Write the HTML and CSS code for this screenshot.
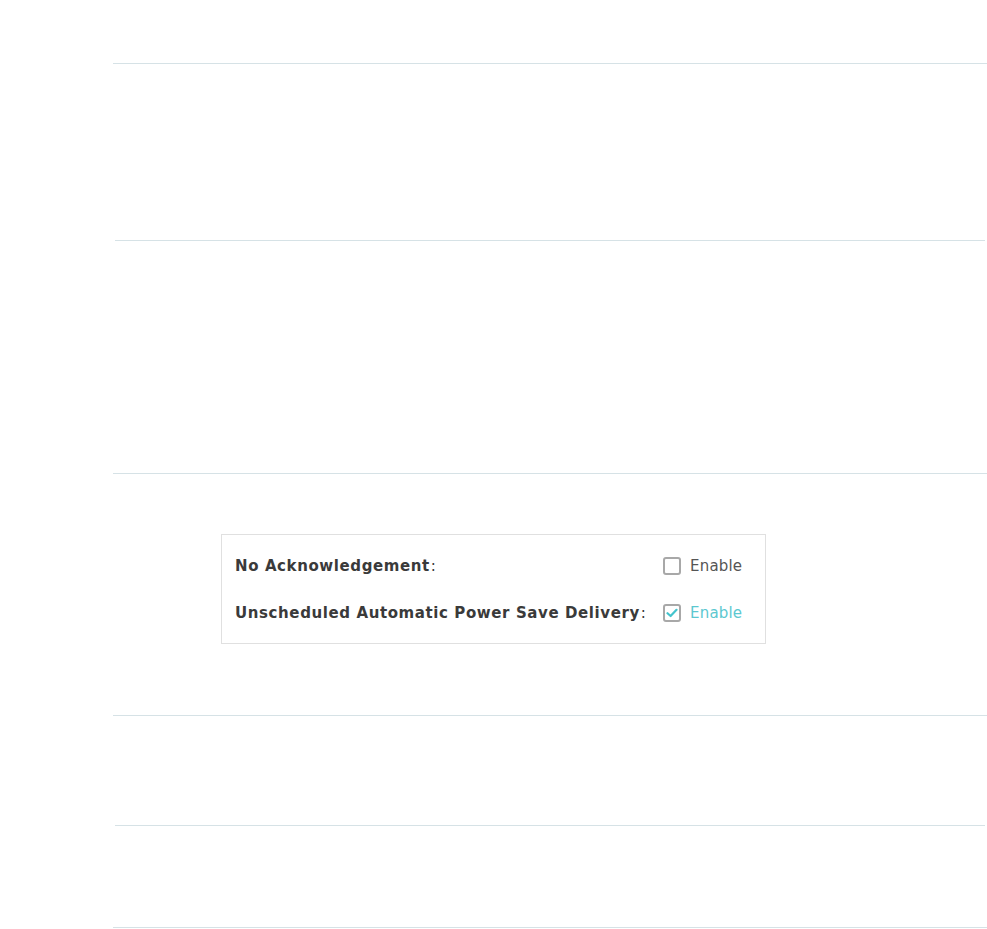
FILE: index.html
```html
<!DOCTYPE html>
<html lang="en">
<head>
  <meta charset="UTF-8">
  <title>Wireless Advanced</title>
  <link rel="stylesheet" href="styles.css">
</head>
<body>
  <div class="page">
    <div class="block top"></div>
    <div class="rule"></div>
    <div class="block b1"></div>
    <div class="rule inset"></div>
    <div class="block b2"></div>
    <div class="rule"></div>
    <div class="block wmm">
      <div class="panel">
        <div class="row">
          <label class="name">No Acknowledgement<span class="colon">:</span></label>
          <div class="check">
            <span class="box"></span>
            <span class="text">Enable</span>
          </div>
        </div>
        <div class="row">
          <label class="name">Unscheduled Automatic Power Save Delivery<span class="colon">:</span></label>
          <div class="check on">
            <span class="box">
              <svg width="12" height="10" viewBox="0 0 12 10"><path d="M1.5 5.2 L4.6 8 L10.5 1.8" fill="none" stroke="#44c4cd" stroke-width="2.2" stroke-linecap="round" stroke-linejoin="round"/></svg>
            </span>
            <span class="text">Enable</span>
          </div>
        </div>
      </div>
    </div>
    <div class="rule"></div>
    <div class="block b3"></div>
    <div class="rule inset"></div>
    <div class="block b4"></div>
    <div class="rule"></div>
  </div>
</body>
</html>
```

FILE: styles.css
```css
body {
  margin: 0;
  background-color: #fff;
  color: #333;
  font-family: 'DejaVu Sans', Verdana, sans-serif;
  font-size: 15px;
}
.rule {
  height: 1px;
  background-color: #d6e2e6;
  margin-left: 113px;
}
.rule.inset {
  margin-left: 115px;
  margin-right: 2px;
}
.top {
  height: 63px;
}
.b1 {
  height: 176px;
}
.b2 {
  height: 232px;
}
.b3 {
  height: 109px;
}
.b4 {
  height: 101px;
}
.wmm {
  padding: 60px 0 71px 221px;
}
.panel {
  width: 543px;
  border: 1px solid #e0e0e0;
  padding: 7px 0;
}
.row {
  display: grid;
  grid-template-columns: 428px auto;
  align-items: center;
  height: 47px;
  padding-left: 13px;
}
.name {
  font-weight: bold;
  color: #3a3a3a;
  letter-spacing: 0.6px;
}
.colon {
  font-weight: normal;
  margin-left: 1px;
}
.check {
  display: flex;
  align-items: center;
}
.box {
  width: 14px;
  height: 14px;
  border: 2px solid #a8a8a8;
  border-radius: 3px;
  display: flex;
  align-items: center;
  justify-content: center;
  margin-right: 9px;
}
.text {
  color: #555;
  letter-spacing: 0.2px;
}
.check.on .text {
  color: #5cc8d0;
}
```
